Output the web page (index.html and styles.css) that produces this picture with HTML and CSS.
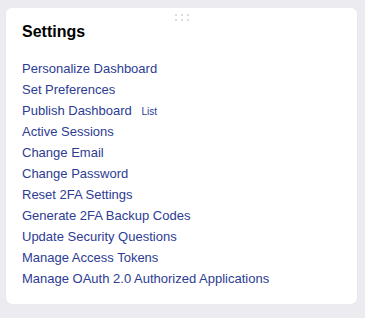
FILE: index.html
```html
<!DOCTYPE html>
<html lang="en">
<head>
    <meta charset="UTF-8">
    <meta name="viewport" content="width=device-width, initial-scale=1.0">
    <title>Settings</title>
    <link rel="stylesheet" href="styles.css">
</head>
<body>
    <div class="card">
        <!-- drag handle -->
        <div class="handle">
            <span></span><span></span><span></span>
            <span></span><span></span><span></span>
        </div>

        <h2 class="card-title">Settings</h2>

        <ul class="settings-list">
            <li><a href="#">Personalize Dashboard</a></li>
            <li><a href="#">Set Preferences</a></li>
            <li><a href="#">Publish Dashboard</a> <span class="tag">List</span></li>
            <li><a href="#">Active Sessions</a></li>
            <li><a href="#">Change Email</a></li>
            <li><a href="#">Change Password</a></li>
            <li><a href="#">Reset 2FA Settings</a></li>
            <li><a href="#">Generate 2FA Backup Codes</a></li>
            <li><a href="#">Update Security Questions</a></li>
            <li><a href="#">Manage Access Tokens</a></li>
            <li><a href="#">Manage OAuth 2.0 Authorized Applications</a></li>
        </ul>
    </div>
</body>
</html>
```

FILE: styles.css
```css
* {
    margin: 0;
    padding: 0;
    box-sizing: border-box;
}

body {
    font-family: "Liberation Sans", Arial, Helvetica, sans-serif;
    background: #ececf0;
    padding: 8px 8px 0 6px;
}

.card {
    position: relative;
    background: #fff;
    border-radius: 6px;
    box-shadow: 0 1px 2px rgba(0, 0, 0, 0.04);
    padding: 14px 16px 15px 16px;
    height: 296px;
}

.handle {
    position: absolute;
    top: 6px;
    left: 50%;
    transform: translateX(-50%);
    display: grid;
    grid-template-columns: repeat(3, 2px);
    gap: 3px 4px;
}

.handle span {
    width: 2px;
    height: 2px;
    background: #dcdce0;
}

.card-title {
    font-size: 16px;
    font-weight: bold;
    line-height: 20px;
    color: #000;
    margin-bottom: 16px;
}

.settings-list {
    list-style: none;
}

.settings-list li {
    font-size: 13px;
    line-height: 21px;
}

.settings-list a {
    color: #2d3c94;
    text-decoration: none;
}

.settings-list a:hover {
    text-decoration: underline;
}

.tag {
    font-size: 10px;
    line-height: 1;
    color: #2d3c94;
    margin-left: 6px;
}
```
